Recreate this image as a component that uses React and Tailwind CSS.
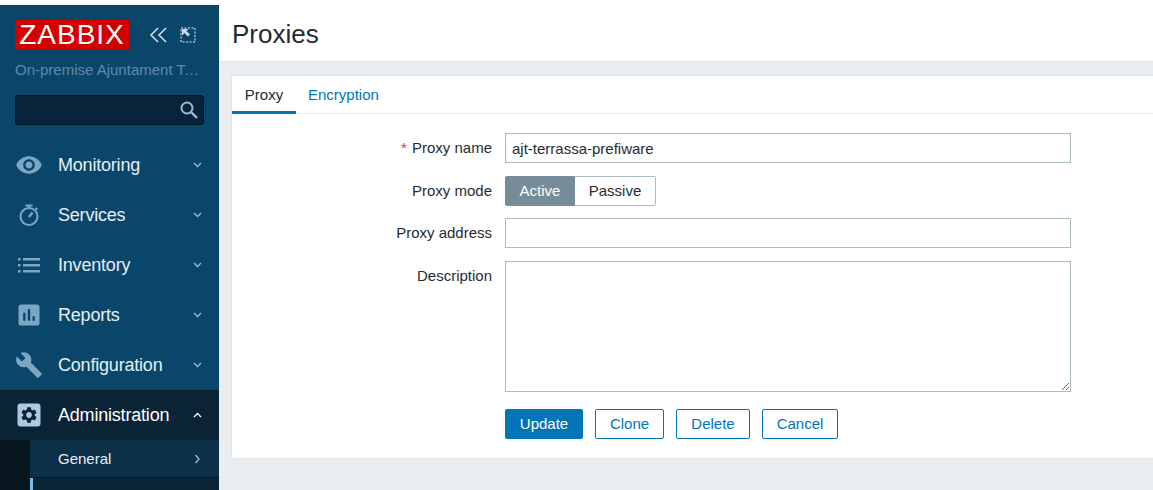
import React from 'react';

function Icon({ d, size = 28 }) {
  return (
    <svg width={size} height={size} viewBox="0 0 24 24" fill="#7ba7c3" fillRule="evenodd"><path d={d} /></svg>
  );
}

const eye = 'M12 4.5C7 4.5 2.73 7.61 1 12c1.73 4.39 6 7.5 11 7.5s9.27-3.11 11-7.5c-1.73-4.39-6-7.5-11-7.5zM12 17c-2.76 0-5-2.24-5-5s2.24-5 5-5 5 2.24 5 5-2.24 5-5 5zm0-8c-1.66 0-3 1.34-3 3s1.34 3 3 3 3-1.34 3-3-1.34-3-3-3z';
const wrench = 'M22.7 19l-9.1-9.1c.9-2.3.4-5-1.5-6.9-2-2-5-2.4-7.4-1.3L9 6 6 9 1.6 4.7C.4 7.1.9 10.1 2.9 12.1c1.9 1.9 4.6 2.4 6.9 1.5l9.1 9.1c.4.4 1 .4 1.4 0l2.3-2.3c.5-.4.5-1.1.1-1.4z';
const chart = 'M19 3H5c-1.1 0-2 .9-2 2v14c0 1.1.9 2 2 2h14c1.1 0 2-.9 2-2V5c0-1.1-.9-2-2-2zM9 17H7v-7h2v7zm4 0h-2V7h2v10zm4 0h-2v-4h2v4z';
const gear = 'M19.14 12.94c.04-.3.06-.61.06-.94 0-.32-.02-.64-.07-.94l2.03-1.58c.18-.14.23-.41.12-.61l-1.92-3.32c-.12-.22-.37-.29-.59-.22l-2.39.96c-.5-.38-1.03-.7-1.62-.94l-.36-2.54c-.04-.24-.24-.41-.48-.41h-3.84c-.24 0-.43.17-.47.41l-.36 2.54c-.59.24-1.13.57-1.62.94l-2.39-.96c-.22-.08-.47 0-.59.22L2.74 8.87c-.12.21-.08.47.12.61l2.03 1.58c-.05.3-.09.63-.09.94s.02.64.07.94l-2.03 1.58c-.18.14-.23.41-.12.61l1.92 3.32c.12.22.37.29.59.22l2.39-.96c.5.38 1.03.7 1.62.94l.36 2.54c.05.24.24.41.48.41h3.84c.24 0 .44-.17.47-.41l.36-2.54c.59-.24 1.13-.56 1.62-.94l2.39.96c.22.08.47 0 .59-.22l1.92-3.32c.12-.22.07-.47-.12-.61l-2.01-1.58zM12 15.6c-1.98 0-3.6-1.62-3.6-3.6s1.62-3.6 3.6-3.6 3.6 1.62 3.6 3.6-1.62 3.6-3.6 3.6z';

function TimerIcon() {
  return (
    <svg width="24" height="24" viewBox="0 0 24 24" fill="none" stroke="#7ba7c3">
      <circle cx="12" cy="13.5" r="8.5" strokeWidth="2" />
      <path d="M8.5 2.5h7M12 2.5v3M18.5 5l1.8 1.8" strokeWidth="2" />
      <path d="M15.5 9.5l-3.5 4.5" strokeWidth="2.4" />
    </svg>
  );
}

function ListIcon() {
  return (
    <svg width="24" height="24" viewBox="0 0 24 24" fill="#7ba7c3">
      <rect x="1" y="5" width="2.5" height="2.5" />
      <rect x="1" y="11" width="2.5" height="2.5" />
      <rect x="1" y="17" width="2.5" height="2.5" />
      <rect x="6" y="5" width="17" height="2.5" />
      <rect x="6" y="11" width="17" height="2.5" />
      <rect x="6" y="17" width="17" height="2.5" />
    </svg>
  );
}

function AdminIcon() {
  return (
    <svg width="24" height="24" viewBox="0 0 24 24">
      <rect x="0.5" y="0.5" width="23" height="23" rx="3" fill="#a9cadf" />
      <path d={gear} fill="#0a2335" fillRule="evenodd" transform="translate(2.4 2.4) scale(0.8)" />
    </svg>
  );
}

function Chevron({ up }) {
  return (
    <svg width="9" height="6" viewBox="0 0 9 6" fill="none" stroke={up ? '#ffffff' : '#9fbccd'} strokeWidth="1.3">
      <path d={up ? 'M1 5l3.5-3.5L8 5' : 'M1 1l3.5 3.5L8 1'} />
    </svg>
  );
}

const menu = [
  { label: 'Monitoring', icon: <Icon d={eye} /> },
  { label: 'Services', icon: <TimerIcon /> },
  { label: 'Inventory', icon: <ListIcon /> },
  { label: 'Reports', icon: <Icon d={chart} /> },
  { label: 'Configuration', icon: <Icon d={wrench} /> },
];

function Sidebar() {
  return (
    <aside className="w-[219px] shrink-0 h-full bg-white pt-[5px]">
      <div className="h-full bg-[#0a466a] flex flex-col overflow-hidden">
        <div className="h-[135px] shrink-0 px-[15px] pt-[15px]">
          <div className="flex items-center">
            <div className="w-[114px] h-[30px] bg-[#d40000] text-white text-[28px] tracking-[1px] leading-[30px] text-center">ZABBIX</div>
            <svg className="ml-[20px]" width="20" height="18" viewBox="0 0 20 18" fill="none" stroke="#c9dbe6" strokeWidth="1.6">
              <path d="M9 2L2 9l7 7M17 2l-7 7 7 7" />
            </svg>
            <svg className="ml-[11px]" width="16" height="16" viewBox="0 0 16 16" fill="none">
              <rect x="1" y="1" width="14" height="14" stroke="#9fbccd" strokeWidth="1.5" strokeDasharray="2 1.5" />
              <path d="M2 2h6.5L6.5 4l3.5 3.5-2 2L4.5 6 2 8.5z" fill="#c9dbe6" />
            </svg>
          </div>
          <div className="mt-[11px] text-[15px] leading-[17px] text-[#5d8aa5] truncate w-[184px]">On-premise Ajuntament Terrassa</div>
          <div className="mt-[17px] h-[30px] w-[189px] rounded-[3px] border border-[#04141f] bg-[#07243a] flex items-center justify-end pr-[4px]">
            <svg width="20" height="20" viewBox="0 0 20 20" fill="none" stroke="#9dbccd" strokeWidth="2">
              <circle cx="8" cy="8" r="5.5" />
              <path d="M12 12l6 6" strokeWidth="2.4" />
            </svg>
          </div>
        </div>

        {menu.map((item) => (
          <div key={item.label} className="h-[50px] shrink-0 flex items-center">
            <div className="w-[58px] flex justify-center shrink-0">{item.icon}</div>
            <span className="text-[18px] tracking-[-0.2px] text-[#e6eef3] flex-1">{item.label}</span>
            <span className="w-[9px] mr-[17px] flex"><Chevron /></span>
          </div>
        ))}

        <div className="h-[50px] shrink-0 flex items-center bg-[#0a2335]">
          <div className="w-[58px] flex justify-center shrink-0"><AdminIcon /></div>
          <span className="text-[18px] tracking-[-0.2px] text-white flex-1">Administration</span>
          <span className="w-[9px] mr-[17px] flex"><Chevron up /></span>
        </div>
        <div className="flex-1 flex bg-[#07151f]">
          <div className="w-[30px] shrink-0" />
          <div className="flex-1 flex flex-col">
            <div className="h-[38px] bg-[#0d3049] flex items-center pt-[1px] pl-[28px] pr-[18px] border-b border-[#051420]">
              <span className="flex-1 text-[15px] text-[#e6eef3]">General</span>
              <svg width="7" height="10" viewBox="0 0 7 10" fill="none" stroke="#9fbccd" strokeWidth="1.3"><path d="M1.5 1l3.5 4-3.5 4" /></svg>
            </div>
            <div className="flex-1 bg-[#0a2335] border-l-[3px] border-[#7dbde8]" />
          </div>
        </div>
      </div>
    </aside>
  );
}

function Row({ label, required, children }) {
  return (
    <div className="flex gap-[13px]">
      <div className="w-[260px] h-[30px] text-right text-[15px] leading-[30px] text-[#1f2c33] shrink-0">
        {required && <span className="text-[#e33734] mr-[5px]">*</span>}
        {label}
      </div>
      {children}
    </div>
  );
}

function Field({ value }) {
  return (
    <input
      readOnly
      value={value}
      className="w-[566px] h-[30px] border border-[#acbbc2] px-[6px] pt-[1px] text-[15px] text-[#1f2c33] outline-none bg-white"
    />
  );
}

export default function App() {
  return (
    <div className="w-[1153px] h-[490px] flex overflow-hidden bg-white font-['Liberation_Sans',Arial,sans-serif]">
      <Sidebar />
      <div className="flex-1 min-w-0 flex flex-col">
        <header className="h-[62px] shrink-0 bg-white flex items-center pl-[13px] pt-[8px] border-b border-[#dfe4e7]">
          <h1 className="text-[26px] text-[#1f2c33]">Proxies</h1>
        </header>
        <main className="flex-1 bg-[#ebeef0] pl-[12px] pt-[13px]">
          <div className="bg-white border-l border-t border-b border-[#dfe4e7] h-[384px]">
            <div className="h-[38px] border-b border-[#ebeef0] flex text-[15px]">
              <div className="w-[64px] h-[38px] border-b-[3px] border-[#0275b8] text-center leading-[38px] text-[#1f2c33]">Proxy</div>
              <div className="pl-[12px] leading-[38px] text-[#0275b8]">Encryption</div>
            </div>
            <form className="pt-[19px] flex flex-col gap-[13px]">
              <Row label="Proxy name" required>
                <Field value="ajt-terrassa-prefiware" />
              </Row>
              <Row label="Proxy mode">
                <div className="flex h-[30px] text-[15px]">
                  <div className="w-[70px] bg-[#768d99] border border-[#768d99] rounded-l-[2px] text-white text-center leading-[28px]">Active</div>
                  <div className="w-[81px] border border-l-0 border-[#acbbc2] rounded-r-[2px] text-[#1f2c33] text-center leading-[28px]">Passive</div>
                </div>
              </Row>
              <div className="-mt-[1px]">
                <Row label="Proxy address">
                  <Field value="" />
                </Row>
              </div>
              <Row label="Description">
                <textarea readOnly className="w-[566px] h-[131px] border border-[#acbbc2] outline-none bg-white block" />
              </Row>
              <div className="flex gap-[12px] pl-[273px] pt-[4px] text-[15px]">
                <button type="button" className="w-[78px] h-[30px] pt-[1px] bg-[#0275b8] rounded-[2px] text-white">Update</button>
                <button type="button" className="w-[69px] h-[30px] pt-[1px] border border-[#0275b8] rounded-[2px] text-[#0275b8]">Clone</button>
                <button type="button" className="w-[74px] h-[30px] pt-[1px] border border-[#0275b8] rounded-[2px] text-[#0275b8]">Delete</button>
                <button type="button" className="w-[76px] h-[30px] pt-[1px] border border-[#0275b8] rounded-[2px] text-[#0275b8]">Cancel</button>
              </div>
            </form>
          </div>
        </main>
      </div>
    </div>
  );
}
